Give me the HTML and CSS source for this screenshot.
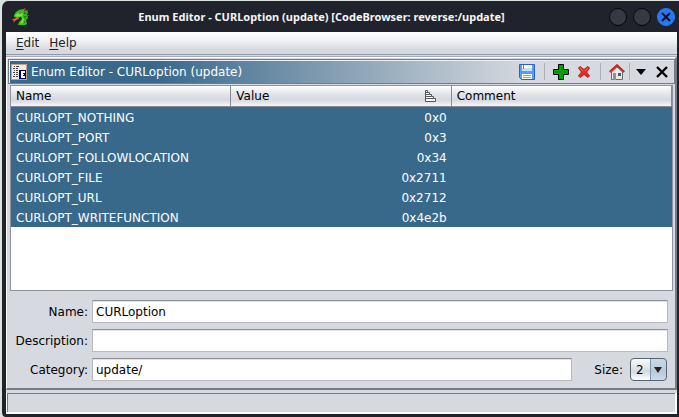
FILE: index.html
```html
<!DOCTYPE html>
<html lang="en">
<head>
<meta charset="utf-8">
<title>Enum Editor</title>
<link rel="stylesheet" href="styles.css">
</head>
<body>
<div class="window">
  <header class="titlebar">
    <svg class="dragon" viewBox="0 0 18 18" aria-hidden="true">
      <path fill="#36bd20" d="M2 7 4 4l3-2 4-1 3 1 2 2-1 3 1 3-2 2 1 4-2 1H6l1-3 3-3-1-2-4 1-3-1z"/>
      <path fill="#78e43b" d="M3 7l5-3 3 2-1 2-5 1zM10 9l2 2-1 4-3 1 2-4z"/>
      <path fill="none" stroke="#24551b" stroke-width=".7" d="M13 3l-1 3 3-1M15 8l-3 1 3 3M12 13l1 2"/>
      <path fill="#7c4926" d="M12 0h1l1 3h-2zM15 2h1v2h-1zM17 7v1h-2V7z"/>
      <path fill="#777" d="M7 4h2v2H7z"/>
      <path fill="#f26522" d="M6 9 2 11l-2 0 2 2-1 2 3-3 3-1z"/>
    </svg>
    <h1>Enum Editor - CURLoption (update) [CodeBrowser: reverse:/update]</h1>
    <div class="window-buttons">
      <button class="round" aria-label="Minimize"></button>
      <button class="round" aria-label="Maximize"></button>
      <button class="round close" aria-label="Close"><svg viewBox="0 0 16 16"><path d="m4 4 8 8m0-8-8 8"/></svg></button>
    </div>
  </header>
  <div class="content">
    <nav class="menu"><button><u>E</u>dit</button><button><u>H</u>elp</button></nav>
    <main class="panel">
      <div class="panel-title">
        <svg class="enum" viewBox="0 0 16 16" aria-hidden="true" shape-rendering="crispEdges">
          <path fill="#c8a286" d="M0 0h16v16H0z"/><path fill="#f1ebe6" d="M1 1h14v14H1z"/>
          <path stroke="#444" d="M3 2.500h1m1 0h3M2 4.500h2m1 0h2M3 6.500h1m1 0h2M2 8.500h2m1 0h2M3 10.500h1m1 0h2M2 12.500h2m1 0h2"/>
          <path fill="#00006a" d="M8 6h7v9H8z"/><path fill="#fff" d="M10 7h4v2h-2v1h1v1h-1v1h2v2h-4z"/>
        </svg>
        <h2>Enum Editor - CURLoption (update)</h2>
        <div class="tools">
          <button class="save" aria-label="Save"><svg viewBox="0 0 16 16"><path fill="#5c9ee8" stroke="#2864be" d="M.5.5h15v15H2.500l-2-2z"/><path fill="#fff" d="M3 1h10v6H3z"/><path fill="#c8def5" d="M3 4h10v3H3z"/><path fill="#4d89d1" d="M4 1h1v4H4z"/><path fill="#f6fcef" d="M3 10h10v5H3z"/><path fill="#80c457" d="M4 11h8v1H4zM4 13h8v1H4z"/></svg></button>
          <button class="add" aria-label="Add"><svg viewBox="0 0 16 16"><path fill="#00a000" stroke="#000" d="M5.500.5h5v5h5v5h-5v5h-5v-5h-5v-5h5z"/></svg></button>
          <button class="delete" aria-label="Delete"><svg viewBox="0 0 14 14"><path fill="#e62925" stroke="#b42020" stroke-linejoin="round" d="M3 1.500 7 4.500l4-3L12.500 3l-3 4 3 4-1.500 1.500-4-3-4 3L1.500 11l3-4-3-4z"/><path fill="none" stroke="#f66b61" d="m3 3 3 3m5-3L8 6"/></svg></button>
          <button class="home" aria-label="Home"><svg viewBox="0 0 16 16"><path fill="#eee9df" stroke="#666b70" d="M2.500 8 8 3l5.500 5v7.500h-11z"/><path fill="#8e9295" d="M4 9h3v7H4z"/><path fill="#315f85" d="M9 9h3v3H9z"/><path fill="none" stroke="#d71d1d" stroke-width="2" d="M.7 8 8 1.200 15.300 8"/></svg></button>
          <button class="more" aria-label="Menu"><svg viewBox="0 0 10 6"><path d="M0 0h10L5 6z"/></svg></button>
          <button class="shut" aria-label="Close panel"><svg viewBox="0 0 12 12"><path fill="none" stroke="#000" stroke-width="2.400" d="m1 1 10 10m0-10L1 11"/></svg></button>
        </div>
      </div>
      <div class="table-box">
        <table>
          <thead><tr><th>Name</th><th><div class="sorted">Value<svg viewBox="0 0 12 12" aria-hidden="true"><path fill="#fff" stroke="#555" d="M.5.5h2v2h2v2h2v2h2v2h2v3H.5zM.5 2.500h2m-2 2h4m-4 2h6m-6 2h8"/></svg></div></th><th>Comment</th></tr></thead>
          <tbody>
            <tr><td>CURLOPT_NOTHING</td><td>0x0</td><td></td></tr>
            <tr><td>CURLOPT_PORT</td><td>0x3</td><td></td></tr>
            <tr><td>CURLOPT_FOLLOWLOCATION</td><td>0x34</td><td></td></tr>
            <tr><td>CURLOPT_FILE</td><td>0x2711</td><td></td></tr>
            <tr><td>CURLOPT_URL</td><td>0x2712</td><td></td></tr>
            <tr><td>CURLOPT_WRITEFUNCTION</td><td>0x4e2b</td><td></td></tr>
          </tbody>
        </table>
      </div>
      <form class="form">
        <label for="name">Name:</label><input id="name" type="text" value="CURLoption">
        <label for="description">Description:</label><input id="description" type="text">
        <label for="category">Category:</label>
        <div class="category-row">
          <input id="category" type="text" value="update/">
          <label for="size">Size:</label>
          <span class="select"><select id="size"><option>1</option><option selected>2</option><option>4</option><option>8</option></select></span>
        </div>
      </form>
    </main>
    <footer class="status"></footer>
  </div>
</div>
</body>
</html>
```
FILE: styles.css
```css
* { box-sizing: border-box; }
body { margin: 0; background: #dce3df; color: #000; font: 12px/20px "DejaVu Sans", sans-serif; }
button { padding: 0; border: 0; background: none; color: inherit; font: inherit; }
svg { display: block; }
h1, h2 { margin: 0; }

.window { display: flex; flex-direction: column; min-height: 100vh; padding: 0 2px 3px 4px; border: solid #dce3df; border-width: 1px 0 0 2px; border-radius: 8px 0 0 5px; background: #20232c; }
.titlebar { display: grid; grid-template-columns: 36px 1fr 80px; align-items: center; height: 31px; padding: 0 2px 0 6px; color: #f5f5f5; }
.titlebar h1 { text-align: center; white-space: nowrap; font: 700 11px/20px "Noto Sans", sans-serif; }
.dragon { width: 18px; height: 18px; }
.window-buttons { display: flex; justify-content: flex-end; gap: 6px; }
.round { display: flex; align-items: center; justify-content: center; width: 18px; height: 18px; border: 1px solid #050608; border-radius: 50%; background: #343943; }
.round.close { border-color: #2879fa; background: #2879fa; }
.close svg { width: 16px; height: 16px; fill: none; stroke: #10131b; stroke-width: 2; }

.content { display: flex; flex: 1; flex-direction: column; background: #d6d9df; }
.menu { display: flex; gap: 10px; height: 23px; margin-bottom: 2px; padding: 1px 10px; border-bottom: 1px solid #8f99a8; background: linear-gradient(#fff, #f0f1f4 40%, #d6d9df 80%); color: #232323; }
.menu button { height: 20px; }
.menu u { text-underline-offset: 2px; }
.panel { display: flex; flex: 1; flex-direction: column; padding: 1px 0 0 1px; border: solid #777b82; border-width: 1px 2px 2px 1px; border-top-color: #fff; border-left-color: #fff; box-shadow: 0 -1px #a6abba; }
.panel-title { display: flex; align-items: center; height: 25px; padding: 0 6px 0 2px; border: 1px solid #777b82; background: linear-gradient(90deg, #39698a 22%, #d6d9df 78%); box-shadow: inset 1px 1px #edf0f4; }
.panel-title h2 { flex: 1; margin-left: 4px; color: #fff; font-size: 12px; font-weight: 400; }
.enum { width: 16px; height: 16px; }
.tools, .tools button { display: flex; align-items: center; }
.save svg, .add svg, .home svg { width: 16px; height: 16px; }
.save { padding-right: 9px; }
.add { height: 17px; padding: 0 8px; border-left: 1px solid #aaafb8; }
.delete { padding-right: 9px; }
.delete svg { width: 14px; height: 14px; }
.home { height: 17px; padding: 0 4px 0 8px; border: solid #aaafb8; border-width: 0 1px; }
.more { padding: 0 10px 0 6px; }
.more svg { width: 10px; height: 6px; }
.shut svg { width: 12px; height: 12px; }

.table-box { flex: 1; margin: 1px 2px 0; border: 1px solid #8d93a5; background: #fff; }
table { width: 100%; border-collapse: separate; border-spacing: 0; table-layout: fixed; color: #fff; }
th { height: 21px; padding: 0 5px; border: solid #858a95; border-width: 0 1px 1px 0; background: linear-gradient(#fff, #e2e4e8 40%, #d6d9df 70%, #f4f5fb); color: #000; font-weight: 400; text-align: left; }
td { height: 20px; padding: 2px 5px 0; background: #39698a; line-height: 18px; }
td:nth-child(2) { text-align: right; }
.sorted { display: flex; justify-content: space-between; align-items: center; padding-right: 9px; }
.sorted svg { width: 12px; height: 12px; }

.form { display: grid; grid-template-columns: 80px 1fr; gap: 6px 4px; align-items: center; padding: 9px 7px 7px 0; }
.form > label { text-align: right; }
input { width: 100%; min-width: 0; height: 23px; padding: 0 3px; border: 1px solid #b9bbc0; border-top-color: #8d8e8f; border-radius: 0; background: #fff; box-shadow: inset 0 1px #e2e3e5; color: #000; font: inherit; outline: 0; }
.category-row { display: flex; align-items: center; }
.category-row input { flex: 1; }
.category-row label { padding: 0 7px 0 22px; }
.select { position: relative; width: 37px; height: 23px; margin-right: 1px; overflow: hidden; border: 1px solid #526679; border-radius: 4px; background: linear-gradient(90deg, transparent 19px, #7898b3 19px 20px, #9fbdd488 20px), linear-gradient(#fafafa, #d6d9df 60%, #fff); }
.select::after { position: absolute; top: 8px; right: 4px; border: solid transparent; border-width: 6px 4px 0; border-top-color: #222; content: ""; pointer-events: none; }
select { display: block; width: 100%; height: 21px; padding: 0 5px; border: 0; background: none; color: #000; font: inherit; appearance: none; }
.status { height: 21px; margin-top: 3px; border: solid #fff; border-width: 0 2px 2px 1px; box-shadow: inset 1px 1px #777b82; }
```
